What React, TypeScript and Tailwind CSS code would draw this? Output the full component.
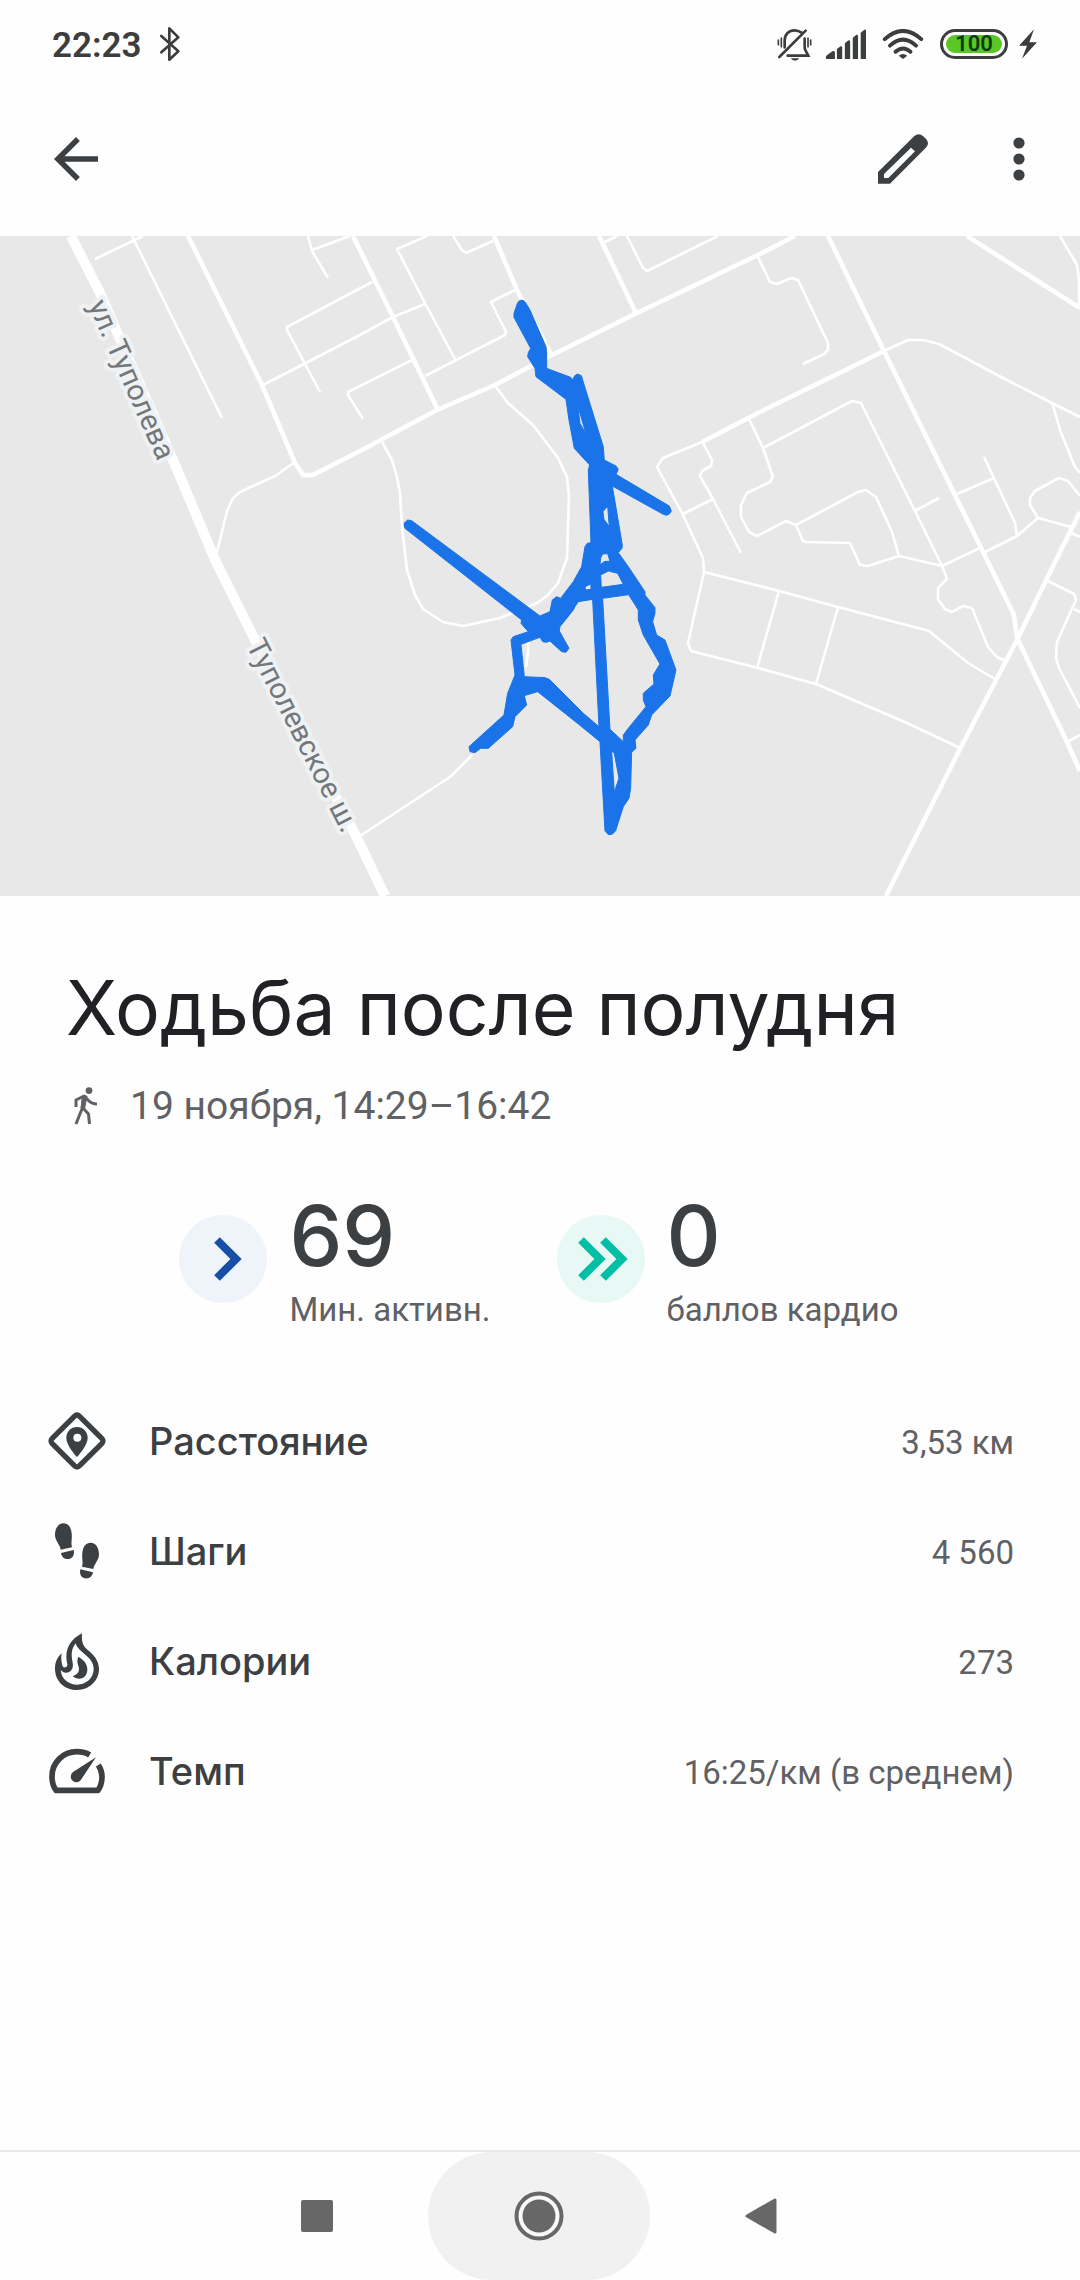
import type { ReactNode } from "react";
import { MdArrowBack } from "react-icons/md";

const majorRoad = "M71 236 L100 293 L173 460 L216 562 L255 640 L353 830 L385 896";

const mediumRoads = [
  "M188 236 L262 385 L295 463 L303 475 L313 475 L360 451 L437 410 L495 385 L550 356 L637 313 L758 255 L795 236",
  "M353 236 L393 317 L438 410",
  "M494 236 L517 290 L552 356",
  "M599 236 L636 313",
  "M828 236 L884 351 L987 560 L1014 615 L1017 638 L1067 742 L1080 771",
  "M967 236 L1080 308",
  "M702 442 L760 412 L884 351",
  "M1080 512 L1056 560 L1017 640 L960 749 L886 896",
];

const minorRoads = [
  "M95 259 L143 236",
  "M132 236 L222 418",
  "M308 236 L312 251 L328 278",
  "M312 250 L350 236",
  "M372 282 L287 327 L287 330 L320 392",
  "M263 385 L360 335 L393 317 L425 304",
  "M427 236 L397 249 L425 303 L455 359",
  "M453 236 L462 250 L466 253 L493 241",
  "M517 289 L491 302 L506 332 L505 335 L425 376",
  "M412 360 L348 392 L348 395 L363 419",
  "M627 236 L643 268 L647 271 L718 236",
  "M603 243 L617 236",
  "M758 257 L770 282 L777 284 L791 278 L798 280 L828 343 L828 350 L824 354 L803 364",
  "M1060 236 L1077 265 L1079 280 L1079 305",
  "M702 442 L663 458 L657 467 L683 515 L703 558 L704 572 L688 643 L691 651 L758 668 L816 684 L907 723 L960 748",
  "M704 572 L779 591 L838 607 L929 631 L968 663 L995 679",
  "M779 591 L757 668",
  "M838 607 L816 684",
  "M884 351 L908 340 L923 340 L939 344 L1003 378 L1050 402 L1080 417",
  "M1052 402 L1060 430 L1075 467 L1080 473",
  "M749 419 L763 448 L773 477 L770 482 L747 493 L741 505 L741 517 L749 532 L757 536 L786 521 L796 525 L803 541 L806 542 L850 543 L860 565 L868 566 L899 556 L942 566 L980 548",
  "M763 448 L852 401 L861 403 L915 511 L942 566 L947 579 L938 588 L938 599 L945 609 L952 612 L963 606 L972 608 L988 647 L997 657 L1005 661",
  "M915 511 L939 498",
  "M796 525 L858 492 L866 490 L876 497 L892 532 L899 556",
  "M957 494 L994 478",
  "M984 457 L1015 523 L1017 536",
  "M985 552 L1017 536 L1038 518 L1071 527",
  "M1038 518 L1030 505 L1030 498 L1035 491 L1059 478 L1068 481 L1080 496",
  "M1071 533 L1080 537",
  "M1048 581 L1074 594 L1076 600 L1057 642 L1056 658 L1059 668 L1080 708",
  "M1074 609 L1080 612",
  "M1067 742 L1080 735",
  "M703 443 L712 460 L711 466 L702 471 L700 476 L713 499 L741 553",
  "M683 514 L713 499",
  "M382 442 L392 460 L397 477 L400 493 L402 527 L407 570 L415 595 L423 609 L443 622 L463 626 L500 618 L537 603 L548 595 L558 583 L567 558 L569 497 L567 477 L558 458 L533 425 L508 403 L496 387",
  "M295 462 L275 476 L240 492 L233 498 L227 511 L217 552",
  "M360 836 L450 777 L472 755",
  "M528 640 L528 652 L526 667",
];

// Outer edge of the recorded track first, then the gaps inside it.
const trackPath = [
  "M473 -772 L480 -779 L490 -779 L497 -772 L510 -750 L558 -640 L560 -620 L560 -575 L632 -548 L639 -541 L644 -553 L653 -558 L664 -553 L730 -340 L733 -300 L768 -282 L775 -272 L768 -257 L928 -162 L934 -147 L928 -138 L920 -134 L910 -137 L757 -222 L787 -45 L786 -35 L775 -22 L805 20 L855 95 L855 105 L885 143 L885 160 L878 185 L890 225 L915 240 L948 330 L930 408 L875 465 L865 495 L825 540 L828 565 L815 577 L812 685 L807 715 L790 740 L767 812 L758 822 L745 824 L735 812 L720 545 L655 492 L533 395 L493 407 L500 435 L465 470 L458 500 L385 565 L362 565 L345 578 L330 575 L327 560 L432 465 L443 400 L465 345 L453 240 L460 230 L505 215 L483 190 L485 180 L135 -95 L132 -110 L143 -120 L155 -118 L540 168 L570 155 L577 120 L590 110 L602 115 L640 65 L665 20 L675 -40 L682 -50 L693 -52 L685 -270 L689 -285 L643 -335 L627 -420 L618 -482 L528 -550 L525 -575 L503 -610 L505 -622 L512 -635 L462 -728 L462 -740 Z",
  "M641 -530 L653 -465 L678 -378 L660 -410 L654 -460 Z",
  "M743 -162 L748 -100 L732 -122 L729 -145 Z",
  "M728 -18 L743 -19 L750 4 L735 4 L720 14 L722 -6 Z",
  "M722 45 L745 33 L773 40 L790 73 L724 82 Z",
  "M675 80 L693 72 L693 88 L677 90 Z",
  "M655 125 L698 118 L717 500 L670 460 L568 358 L555 353 L493 350 L483 253 L540 232 L548 245 L560 247 L570 243 L605 275 L618 277 L627 265 L598 213 L600 200 L640 150 L645 140 Z",
  "M728 115 L806 104 L835 150 L835 180 L850 225 L900 312 L880 345 L882 372 L850 400 L850 420 L858 440 L805 505 L790 525 L790 545 L750 508 Z",
  "M755 573 L763 580 L777 655 L763 697 Z",
].join(" ");

function ActivityMap() {
  return (
    <svg viewBox="0 236 1080 660" className="block h-auto w-full bg-[#e8e8e8]" role="img" aria-label="Карта маршрута">
      <g fill="none" stroke="#ffffff" strokeLinejoin="round">
        <g strokeWidth="2.6">
          {minorRoads.map((d) => (
            <path key={d} d={d} />
          ))}
        </g>
        <g strokeWidth="4.6">
          {mediumRoads.map((d) => (
            <path key={d} d={d} />
          ))}
        </g>
        <path d={majorRoad} strokeWidth="10" />
      </g>
      <g
        className="font-[Roboto,sans-serif] text-[29px]"
        fill="#73777a"
        stroke="#eff2f4"
        strokeWidth="8"
        strokeLinejoin="round"
        paintOrder="stroke"
      >
        <text transform="translate(88 305) rotate(66)">ул. Туполева</text>
        <text transform="translate(246 645) rotate(63)">Туполевское ш.</text>
      </g>
      <path
        d={trackPath}
        fill="#1a73e8"
        fillRule="evenodd"
        stroke="#1a73e8"
        strokeWidth="3"
        strokeLinejoin="round"
        transform="translate(360 560) scale(0.3333)"
      />
    </svg>
  );
}

function StatusBar() {
  return (
    <div className="flex h-[84px] items-center justify-between pr-[43px] pl-[52px] pt-1 text-[#3c3d3f]">
      <div className="flex items-center gap-4">
        <span className="pt-1 text-[35px] leading-[40px] font-semibold">22:23</span>
        <svg viewBox="0 0 70 108" className="h-9 w-6" fill="none" stroke="currentColor" strokeWidth="8" strokeLinecap="round" strokeLinejoin="round" aria-hidden="true">
          <path d="M9 30 L60 76 L33 101 V7 L60 34 L9 79" />
        </svg>
      </div>
      <div className="flex items-center">
        <svg viewBox="0 0 105 99" className="mr-[14px] h-[33px] w-[35px]" fill="none" stroke="currentColor" strokeWidth="8" strokeLinecap="round" aria-hidden="true">
          <path d="M23 58 V38 C23 18 36 7 53 7 C61 7 68 10 74 14 M83 32 V60 C84 68 90 74 94 83 H32" />
          <path d="M7 87 L86 8" />
          <path d="M4 36 V50 M13 30 V56 M93 30 V56 M101 36 V50" strokeWidth="5" />
          <path d="M41 91 H67 Q62 98 54 98 Q46 98 41 91 Z" fill="currentColor" stroke="none" />
        </svg>
        <svg viewBox="0 0 121 90" className="mr-4 h-[30px] w-10" fill="currentColor" aria-hidden="true">
          <path d="M0 90 V81 L19 67 Q27 64 27 71 V90 Z" />
          <path d="M33 90 V60 L44 52 Q49 50 49 56 V90 Z" />
          <path d="M57 90 V43 L68 34 Q73 33 73 39 V90 Z" />
          <path d="M81 90 V26 L92 17 Q97 16 97 22 V90 Z" />
          <path d="M105 90 V11 L116 2 Q121 0 121 6 V90 Z" />
        </svg>
        <svg viewBox="0 0 126 92" className="mr-4 h-[30px] w-[42px]" fill="none" stroke="currentColor" strokeWidth="12" strokeLinecap="round" aria-hidden="true">
          <path d="M7 31 Q63 -19 119 31" />
          <path d="M23 51 Q63 14 103 51" />
          <path d="M40 70 Q63 50 86 70" />
          <path d="M50 82 Q63 71 76 82 L63 92 Z" fill="currentColor" stroke="none" />
        </svg>
        <div className="mr-[11px] h-[30px] w-[68px] rounded-full border-3 border-[#3c3d3f] p-[3px]">
          <div className="flex h-full items-center justify-center rounded-full bg-[#5ac725] text-[22px] leading-none font-semibold text-[#0c3b02]">
            100
          </div>
        </div>
        <svg viewBox="0 0 54 88" className="h-[30px] w-[18px]" fill="currentColor" aria-hidden="true">
          <path d="M45 0 L0 49 H24 L9 88 L54 39 H31 Z" />
        </svg>
      </div>
    </div>
  );
}

function AppBar() {
  return (
    <header className="flex h-[152px] items-center justify-between pr-[28px] pb-[2px] pl-[43px] text-[#3c4043]">
      <button type="button" aria-label="Назад">
        <MdArrowBack className="size-[66px]" />
      </button>
      <div className="flex items-center gap-[58px]">
        <button type="button" aria-label="Изменить">
          <svg viewBox="0 0 150 150" className="size-[50px]" fill="currentColor" fillRule="evenodd" aria-hidden="true">
            <path d="M0 114 L109 6 Q122 -5 135 6 L145 16 Q155 28 145 40 L36 149 H0 Z M18 120 V132 H31 L111 52 L99 41 Z" />
          </svg>
        </button>
        <button type="button" aria-label="Ещё" className="flex h-[66px] w-[66px] items-center justify-center">
          <svg viewBox="0 0 12 44" className="h-11 w-3" fill="currentColor" aria-hidden="true">
            <circle cx="6" cy="6" r="5.6" />
            <circle cx="6" cy="22" r="5.6" />
            <circle cx="6" cy="38" r="5.6" />
          </svg>
        </button>
      </div>
    </header>
  );
}

function WalkIcon() {
  return (
    <svg viewBox="0 0 24 38" className="ml-2 h-[38px] w-6" fill="none" stroke="currentColor" strokeWidth="3" strokeLinejoin="round" aria-hidden="true">
      <circle cx="15" cy="3.6" r="3.4" fill="currentColor" stroke="none" />
      <path d="M2 20 V13 L10 9 L15 14 Q18 17 23 17" />
      <path d="M10 9 L8 22 L5.5 28 L2 37" />
      <path d="M9 21 L14.5 27 L15.5 37" />
      <path d="M8.5 9 L13 9 L10.5 22 L7 21 Z" fill="currentColor" strokeWidth="1" />
    </svg>
  );
}

type ScoreProps = { circleClass: string; icon: ReactNode; value: string; label: string };

function Score({ circleClass, icon, value, label }: ScoreProps) {
  return (
    <div className="flex items-start gap-[22px]">
      <svg viewBox="0 0 88 88" className={`mt-[21px] size-[88px] rounded-full ${circleClass}`} fill="none" stroke="currentColor" strokeWidth="8" aria-hidden="true">
        {icon}
      </svg>
      <div>
        <div className="font-[Inter,sans-serif] text-[84px] leading-[84px] font-medium text-[#3c4043]">{value}</div>
        <div className="mt-2 text-[33px] leading-[48px]">{label}</div>
      </div>
    </div>
  );
}

const metrics = [
  {
    label: "Расстояние",
    value: "3,53 км",
    icon: (
      <>
        <rect x="29" y="29" width="116" height="116" rx="10" transform="rotate(45 87 87)" fill="none" stroke="currentColor" strokeWidth="16" />
        <path d="M87 45 C69 45 55 59 55 77 C55 101 87 135 87 135 S119 101 119 77 C119 59 105 45 87 45 Z M88 65 A12 12 0 1 1 88 89 A12 12 0 1 1 88 65 Z" />
      </>
    ),
  },
  {
    label: "Шаги",
    value: "4 560",
    icon: (
      <>
        <path d="M46 4 C30 4 21 20 21 40 C22 58 36 68 38 83 L72 76 C68 62 73 52 71 34 C69 14 60 4 46 4 Z M39 93 L77 84 C80 96 76 108 64 111 C50 113 41 106 39 93 Z" />
        <path transform="translate(174 58) scale(-1 1)" d="M46 4 C30 4 21 20 21 40 C22 58 36 68 38 83 L72 76 C68 62 73 52 71 34 C69 14 60 4 46 4 Z M39 93 L77 84 C80 96 76 108 64 111 C50 113 41 106 39 93 Z" />
      </>
    ),
  },
  {
    label: "Калории",
    value: "273",
    icon: (
      <>
        <path d="M102 4 C99 40 112 48 124 58 C142 73 153 90 153 112 C153 146 124 174 88 174 C50 174 21 148 21 110 C21 90 28 76 41 64 C38 80 41 94 44 103 C48 110 60 106 58 96 C52 70 52 30 102 4 Z M83 34 C70 52 69 66 74 92 C78 112 66 122 54 122 C46 122 42 118 38 114 C40 140 60 158 88 158 C114 158 137 138 137 111 C137 92 126 80 112 68 C98 56 87 48 83 34 Z" />
        <path d="M91 74 C108 84 118 96 118 112 C118 130 108 140 94 140 C84 140 78 136 74 132 C88 128 96 118 92 104 C88 94 86 86 91 74 Z" />
      </>
    ),
  },
  {
    label: "Темп",
    value: "16:25/км (в среднем)",
    icon: (
      <>
        <path d="M125 39 C114 32 101 29 87 29 C45 29 12 62 12 103 C12 120 16 134 24 145 H150 C158 134 162 120 162 103 C162 91 158 80 151 69" fill="none" stroke="currentColor" strokeWidth="17" strokeLinejoin="round" />
        <path d="M144 46 L101 110 A17 17 0 1 1 75 90 Z" />
      </>
    ),
  },
];

function NavigationBar() {
  return (
    <nav className="flex h-[130px] justify-center border-t-2 border-[#e8e8e8] pr-[2px] text-[#676767]" aria-label="Системная навигация">
      <button type="button" aria-label="Недавние" className="flex w-[222px] items-center justify-center">
        <span className="size-8 rounded-[2px] bg-[#676767]" />
      </button>
      <button type="button" aria-label="Домой" className="flex w-[222px] items-center justify-center rounded-full bg-[#f1f1f1]">
        <svg viewBox="0 0 50 50" className="size-[50px]" aria-hidden="true">
          <circle cx="25" cy="25" r="22.5" fill="#f8f8f8" stroke="currentColor" strokeWidth="4" />
          <circle cx="25" cy="25" r="16.5" fill="currentColor" />
        </svg>
      </button>
      <button type="button" aria-label="Назад" className="flex w-[222px] items-center justify-center">
        <svg viewBox="0 0 32 36" className="h-9 w-8" fill="currentColor" stroke="currentColor" strokeWidth="3" strokeLinejoin="round" aria-hidden="true">
          <path d="M2 18 L30 2 V34 Z" />
        </svg>
      </button>
    </nav>
  );
}

export default function App() {
  return (
    <div className="flex min-h-screen flex-col bg-[#fefefe] font-[Roboto,sans-serif] text-[#5f6164]">
      <StatusBar />
      <AppBar />
      <ActivityMap />
      <main className="flex-1 pt-16">
        <div className="px-[66px]">
          <h1 className="font-[Inter,sans-serif] text-[75px] leading-[96px] text-[#202124]">Ходьба после полудня</h1>
          <p className="mt-[26px] flex items-center gap-8 text-[39px] leading-[48px]">
            <WalkIcon />
            19 ноября, 14:29–16:42
          </p>
        </div>
        <div className="mt-16 flex justify-center gap-[66px] pr-[2px]">
          <Score
            circleClass="bg-[#eff3fa] text-[#174ea6]"
            icon={<path d="M38 25 L57 44 L38 63" />}
            value="69"
            label="Мин. активн."
          />
          <Score
            circleClass="bg-[#e8f8f4] text-[#00bfa5]"
            icon={<path d="M24 25 L43 44 L24 63 M46 25 L65 44 L46 63" />}
            value="0"
            label="баллов кардио"
          />
        </div>
        <dl className="mt-[52px] pr-[66px] pl-12">
          {metrics.map((metric) => (
            <div key={metric.label} className="flex h-[110px] items-center">
              <svg viewBox="0 0 174 174" className="size-[58px] text-[#3c4043]" fill="currentColor" fillRule="evenodd" aria-hidden="true">
                {metric.icon}
              </svg>
              <dt className="ml-[43px] flex-1 font-[Inter,sans-serif] text-[38px] leading-[48px] font-medium text-[#3c4043]">
                {metric.label}
              </dt>
              <dd className="pt-[3px] text-[33px] leading-[48px]">{metric.value}</dd>
            </div>
          ))}
        </dl>
      </main>
      <NavigationBar />
    </div>
  );
}
